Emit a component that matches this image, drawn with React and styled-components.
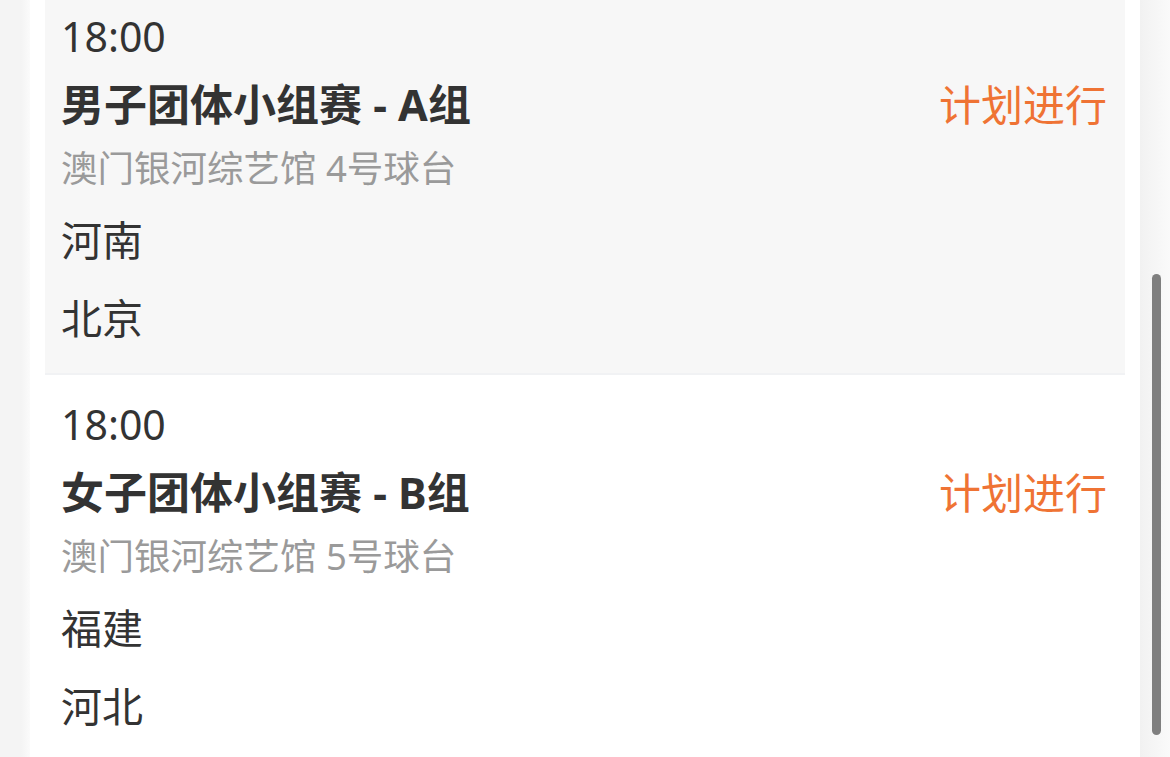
import React from "react";
import styled, { createGlobalStyle } from "styled-components";

const Global = createGlobalStyle`
  html, body { margin: 0; padding: 0; background: #fff; }
  body { font-family: "Noto Sans", "Noto Sans CJK SC", sans-serif; }
`;

const Page = styled.div`
  display: flex;
  width: 1170px;
  height: 757px;
  overflow: hidden;
`;

const LeftGutter = styled.div`
  width: 30px;
  flex: none;
  background: linear-gradient(to right, #f4f4f4 0%, #f4f4f4 70%, #fbfbfb 100%);
`;

const RightGutter = styled.div`
  position: relative;
  width: 30px;
  flex: none;
  background: linear-gradient(to right, #f1f1f1 0%, #f5f5f5 40%, #fafafa 100%);
`;

const Scrollbar = styled.div`
  position: absolute;
  left: 12px;
  top: 274px;
  width: 9px;
  height: 461px;
  border-radius: 5px;
  background: #7f7f7f;
`;

const Panel = styled.div`
  flex: 1;
  background: #fff;
  padding: 0 15px;
`;

const List = styled.div`
  margin-top: -13px;
  display: flex;
  flex-direction: column;
`;

const Card = styled.div`
  background: ${(p) => (p.$highlight ? "#f7f7f7" : "#ffffff")};
  border-bottom: 2px solid ${(p) => (p.$highlight ? "#f1f2f4" : "transparent")};
  padding: 16px 18px 16px 16px;
`;

const Time = styled.div`
  font-size: 41px;
  line-height: 66px;
  color: #333;
`;

const TitleRow = styled.div`
  display: flex;
  justify-content: space-between;
  align-items: center;
  height: 66px;
`;

const Title = styled.div`
  font-size: 43px;
  font-weight: 700;
  color: #333;
`;

const Status = styled.div`
  font-size: 42px;
  color: #ef7334;
`;

const Venue = styled.div`
  font-size: 36.5px;
  line-height: 66px;
  color: #9a9a9a;
`;

const Team = styled.div`
  font-size: 41px;
  line-height: 78px;
  color: #333;
`;

const matches = [
  { time: "18:00", title: "男子团体小组赛 - A组", status: "计划进行", venue: "澳门银河综艺馆 4号球台", teams: ["河南", "北京"], highlight: true },
  { time: "18:00", title: "女子团体小组赛 - B组", status: "计划进行", venue: "澳门银河综艺馆 5号球台", teams: ["福建", "河北"], highlight: false },
];

export default function App() {
  return (
    <>
      <Global />
      <Page>
        <LeftGutter />
        <Panel>
          <List>
            {matches.map((m, i) => (
              <Card key={i} $highlight={m.highlight}>
                <Time>{m.time}</Time>
                <TitleRow>
                  <Title>{m.title}</Title>
                  <Status>{m.status}</Status>
                </TitleRow>
                <Venue>{m.venue}</Venue>
                {m.teams.map((t) => (
                  <Team key={t}>{t}</Team>
                ))}
              </Card>
            ))}
          </List>
        </Panel>
        <RightGutter>
          <Scrollbar />
        </RightGutter>
      </Page>
    </>
  );
}
